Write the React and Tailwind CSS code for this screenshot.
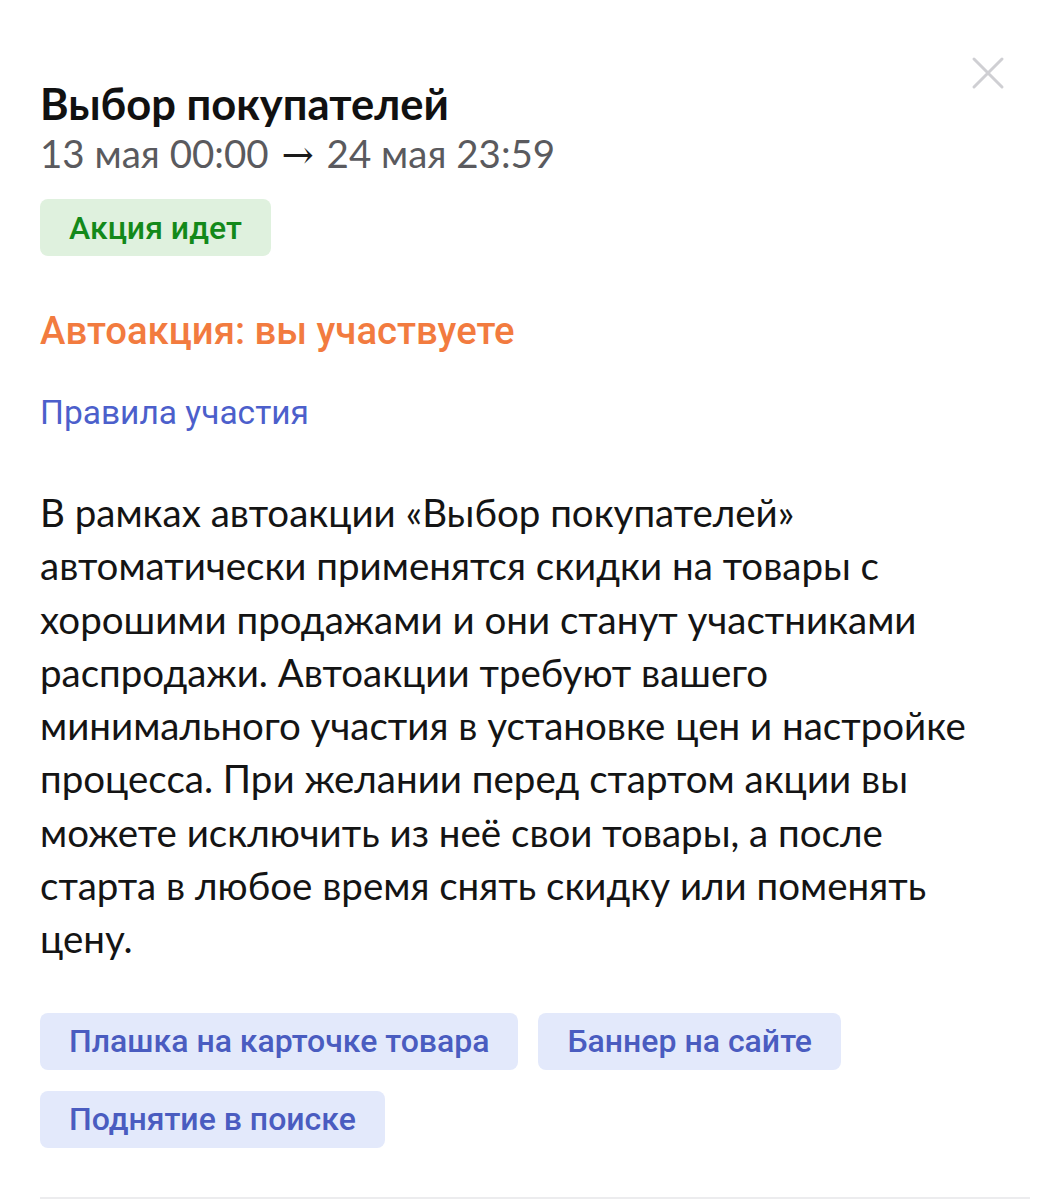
export default function App() {
  return (
    <div className="relative w-[1042px] h-[1200px] bg-white overflow-hidden">
      <button className="absolute left-[970px] top-[55px] w-[36px] h-[36px] flex items-center justify-center">
        <svg width="34" height="34" viewBox="0 0 34 34" fill="none">
          <path d="M3 3L31 31M31 3L3 31" stroke="#cfcfd3" strokeWidth="3" strokeLinecap="round" />
        </svg>
      </button>
      <div className="pl-[40px] pr-[40px] pt-[78px] flex flex-col">
        <h1 className="text-[43.5px] leading-[50px] font-bold text-[#111] font-[Lato,sans-serif]">Выбор покупателей</h1>
        <div className="h-[50px] text-[38.5px] leading-[50px] text-[#5a5a5e] font-[Lato,sans-serif] whitespace-nowrap">
          13 мая 00:00 <span className="mx-[3px] font-['DejaVu_Serif',serif] font-light text-[#1a1a1a] leading-[0]">→</span> 24 мая 23:59
        </div>
        <div className="mt-[21px] flex">
          <span className="h-[57px] px-[29px] rounded-[8px] bg-[#dff1de] text-[#13891a] text-[32px] font-medium flex items-center font-[Roboto,sans-serif]">Акция идет</span>
        </div>
        <div className="mt-[50px] text-[38.3px] leading-[50px] font-medium text-[#f27b3f] font-[Roboto,sans-serif]">Автоакция: вы участвуете</div>
        <a className="mt-[35px] text-[33.5px] leading-[44px] text-[#4c5fcb] font-[Roboto,sans-serif]">Правила участия</a>
        <p className="mt-[51px] text-[38.5px] leading-[53.3px] text-[#141414] w-[962px] font-[Lato,sans-serif]">
          В рамках автоакции «Выбор покупателей» автоматически применятся скидки на товары с хорошими продажами и они станут участниками распродажи. Автоакции требуют вашего минимального участия в установке цен и настройке процесса. При желании перед стартом акции вы можете исключить из неё свои товары, а после старта в любое время снять скидку или поменять цену.
        </p>
        <div className="mt-[47px] flex flex-wrap gap-x-[20px] gap-y-[21px] w-[960px]">
          {['Плашка на карточке товара', 'Баннер на сайте', 'Поднятие в поиске'].map((t) => (
            <span key={t} className="h-[57px] px-[29px] rounded-[8px] bg-[#e3e9fb] text-[#4a5cc0] text-[32px] font-medium flex items-center font-[Roboto,sans-serif]">{t}</span>
          ))}
        </div>
        <div className="mt-[49px] h-[2px] bg-[#ececee] w-[990px]" />
      </div>
    </div>
  );
}
